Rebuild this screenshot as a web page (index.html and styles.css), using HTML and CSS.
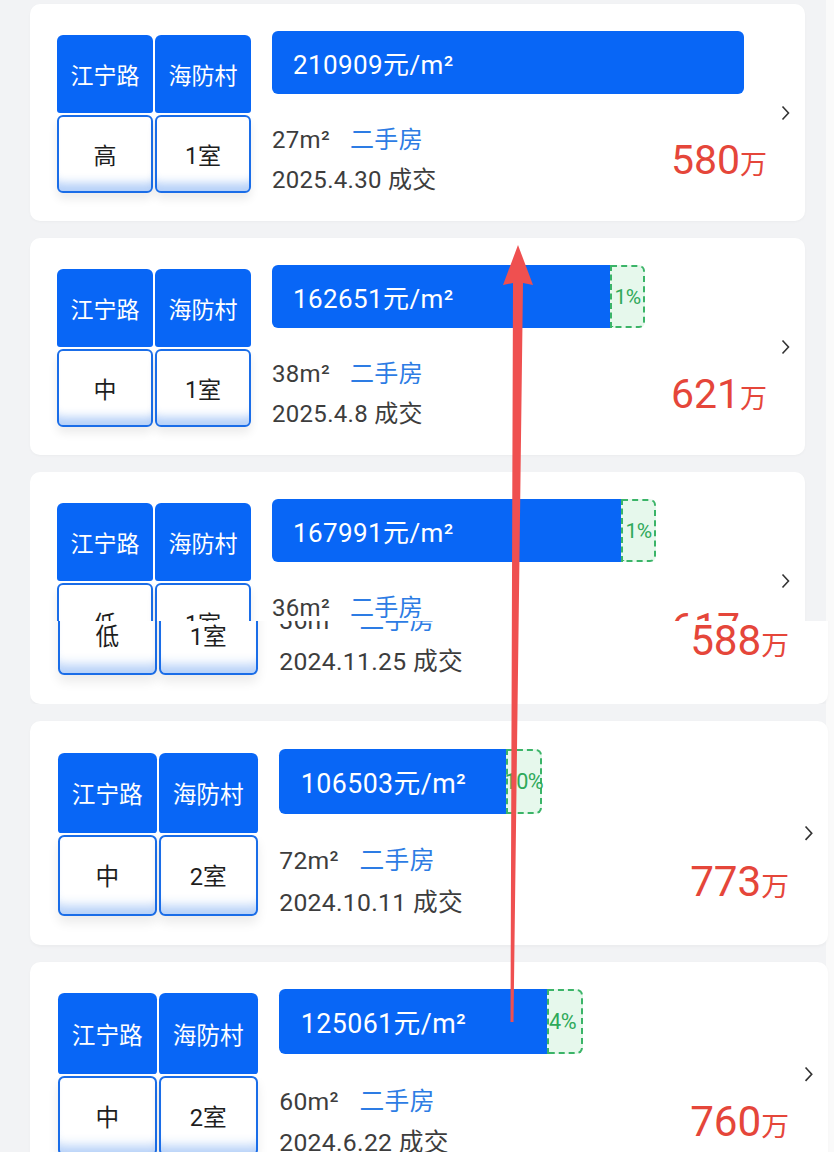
FILE: index.html
```html
<!DOCTYPE html>
<html lang="zh-CN">
<head>
    <meta charset="UTF-8">
    <meta name="viewport" content="width=device-width, initial-scale=1.0">
    <title>成交记录</title>
    <link rel="stylesheet" href="styles.css">
</head>
<body>
    <div class="list">
        <!-- 1 -->
        <div class="card">
            <div class="tags">
                <div class="tag area">江宁路</div>
                <div class="tag area">海防村</div>
                <div class="tag attr">高</div>
                <div class="tag attr">1室</div>
            </div>
            <div class="info">
                <div class="bar-row">
                    <div class="bar" style="width: 472px;">210909元/m²</div>
                </div>
                <div class="bottom">
                    <div class="meta">
                        <div>27m²<span class="kind">二手房</span></div>
                        <div>2025.4.30 成交</div>
                    </div>
                    <div class="price">580<small>万</small></div>
                </div>
            </div>
            <svg class="chev" width="9" height="16" viewBox="0 0 9 16"><path d="M1.5 1.5 L7.5 8 L1.5 14.5" fill="none" stroke="#333" stroke-width="1.6"/></svg>
        </div>

        <!-- 2 -->
        <div class="card">
            <div class="tags">
                <div class="tag area">江宁路</div>
                <div class="tag area">海防村</div>
                <div class="tag attr">中</div>
                <div class="tag attr">1室</div>
            </div>
            <div class="info">
                <div class="bar-row has-pct">
                    <div class="bar" style="width: 338px;">162651元/m²</div>
                    <div class="pct">1%</div>
                </div>
                <div class="bottom">
                    <div class="meta">
                        <div>38m²<span class="kind">二手房</span></div>
                        <div>2025.4.8 成交</div>
                    </div>
                    <div class="price">621<small>万</small></div>
                </div>
            </div>
            <svg class="chev" width="9" height="16" viewBox="0 0 9 16"><path d="M1.5 1.5 L7.5 8 L1.5 14.5" fill="none" stroke="#333" stroke-width="1.6"/></svg>
        </div>

        <!-- 3: two frames stitched together while scrolling -->
        <div class="stitch">
            <div class="stitch-top">
                <div class="card">
                    <div class="tags">
                        <div class="tag area">江宁路</div>
                        <div class="tag area">海防村</div>
                        <div class="tag attr">低</div>
                        <div class="tag attr">1室</div>
                    </div>
                    <div class="info">
                        <div class="bar-row has-pct">
                            <div class="bar" style="width: 349px;">167991元/m²</div>
                            <div class="pct">1%</div>
                        </div>
                        <div class="bottom">
                            <div class="meta">
                                <div>36m²<span class="kind">二手房</span></div>
                                <div>2024.11.25 成交</div>
                            </div>
                            <div class="price">617<small>万</small></div>
                        </div>
                    </div>
                    <svg class="chev" width="9" height="16" viewBox="0 0 9 16"><path d="M1.5 1.5 L7.5 8 L1.5 14.5" fill="none" stroke="#333" stroke-width="1.6"/></svg>
                </div>
            </div>
            <div class="stitch-bottom">
                <div class="card wide shifted">
                    <div class="tags">
                        <div class="tag area">江宁路</div>
                        <div class="tag area">海防村</div>
                        <div class="tag attr">低</div>
                        <div class="tag attr">1室</div>
                    </div>
                    <div class="info">
                        <div class="bar-row has-pct">
                            <div class="bar" style="width: 340px;">167991元/m²</div>
                            <div class="pct">1%</div>
                        </div>
                        <div class="bottom">
                            <div class="meta">
                                <div>36m²<span class="kind">二手房</span></div>
                                <div>2024.11.25 成交</div>
                            </div>
                            <div class="price">588<small>万</small></div>
                        </div>
                    </div>
                    <svg class="chev" width="9" height="16" viewBox="0 0 9 16"><path d="M1.5 1.5 L7.5 8 L1.5 14.5" fill="none" stroke="#333" stroke-width="1.6"/></svg>
                </div>
            </div>
        </div>

        <!-- 4 -->
        <div class="card wide">
            <div class="tags">
                <div class="tag area">江宁路</div>
                <div class="tag area">海防村</div>
                <div class="tag attr">中</div>
                <div class="tag attr">2室</div>
            </div>
            <div class="info">
                <div class="bar-row has-pct">
                    <div class="bar" style="width: 220px;">106503元/m²</div>
                    <div class="pct">10%</div>
                </div>
                <div class="bottom">
                    <div class="meta">
                        <div>72m²<span class="kind">二手房</span></div>
                        <div>2024.10.11 成交</div>
                    </div>
                    <div class="price">773<small>万</small></div>
                </div>
            </div>
            <svg class="chev" width="9" height="16" viewBox="0 0 9 16"><path d="M1.5 1.5 L7.5 8 L1.5 14.5" fill="none" stroke="#333" stroke-width="1.6"/></svg>
        </div>

        <!-- 5 -->
        <div class="card wide">
            <div class="tags">
                <div class="tag area">江宁路</div>
                <div class="tag area">海防村</div>
                <div class="tag attr">中</div>
                <div class="tag attr">2室</div>
            </div>
            <div class="info">
                <div class="bar-row has-pct">
                    <div class="bar" style="width: 260px;">125061元/m²</div>
                    <div class="pct left">4%</div>
                </div>
                <div class="bottom">
                    <div class="meta">
                        <div>60m²<span class="kind">二手房</span></div>
                        <div>2024.6.22 成交</div>
                    </div>
                    <div class="price">760<small>万</small></div>
                </div>
            </div>
            <svg class="chev" width="9" height="16" viewBox="0 0 9 16"><path d="M1.5 1.5 L7.5 8 L1.5 14.5" fill="none" stroke="#333" stroke-width="1.6"/></svg>
        </div>
    </div>

    <!-- hand-drawn annotation on top of the screenshot -->
    <svg class="annotation" width="834" height="1152" viewBox="0 0 834 1152">
        <polygon points="518,245 533,285 523,283 513.5,1022 510.5,1022 513,283 503,285" fill="#ef5050"/>
    </svg>
</body>
</html>
```

FILE: styles.css
```css
* {
    box-sizing: border-box;
}
body {
    margin: 0;
    padding: 4px 0 0 30px;
    position: relative;
    overflow: hidden;
    height: 1152px;
    font-family: Roboto, "Noto Sans CJK SC", sans-serif;
    background: linear-gradient(to right, #f2f3f5 826px, #fafafa 826px);
}
.list {
    display: flex;
    flex-direction: column;
    gap: 17px;
}
.card {
    width: 775px;
    height: 217px;
    flex-shrink: 0;
    background-color: #fff;
    border-radius: 10px;
    box-shadow: 0 1px 3px rgba(0, 0, 0, 0.03);
    display: flex;
    align-items: flex-start;
    padding: 27px 15px 0 27px;
}
/* lower frames of the capture are rendered slightly larger */
.card.wide {
    zoom: 1.03;
}
.tags {
    display: grid;
    grid-template-columns: 96px 96px;
    grid-template-rows: 78px 78px;
    gap: 2px;
    margin-top: 4px;
}
.tag {
    display: flex;
    align-items: center;
    justify-content: center;
    font-size: 23px;
}
.tag.area {
    background-color: #0866f6;
    color: #fff;
    border-radius: 6px 6px 3px 3px;
}
.tag.attr {
    background-color: #fff;
    color: #1e1e1e;
    border: 2px solid #1a6de8;
    border-radius: 6px;
    box-shadow: inset 0 -16px 10px -8px rgba(26, 109, 232, 0.32), 0 6px 10px rgba(0, 0, 0, 0.08);
}
.info {
    margin-left: 21px;
    width: 493px;
    display: flex;
    flex-direction: column;
}
.bar-row {
    display: flex;
    height: 63px;
}
.bar {
    background-color: #0866f6;
    color: #fff;
    border-radius: 6px;
    font-size: 26px;
    letter-spacing: 0.4px;
    padding-left: 21px;
    display: flex;
    align-items: center;
    white-space: nowrap;
}
.has-pct .bar {
    border-radius: 6px 0 0 6px;
}
.pct {
    width: 35px;
    border: 2px dashed #3bb468;
    border-radius: 0 6px 6px 0;
    background-color: #e6f8ec;
    color: #2fa95a;
    font-size: 21px;
    letter-spacing: -0.5px;
    display: flex;
    align-items: center;
    justify-content: center;
    white-space: nowrap;
}
.pct.left {
    justify-content: flex-start;
}
.bottom {
    display: flex;
    justify-content: space-between;
    align-items: center;
    margin-top: 26px;
}
.meta {
    font-size: 24px;
    letter-spacing: 0.3px;
    line-height: 40px;
    color: #3d3d3d;
}
.kind {
    color: #2d7ce4;
    margin-left: 20px;
}
.price {
    color: #e5463a;
    font-size: 41px;
    line-height: 1;
    margin-right: -3px;
}
.price small {
    font-size: 27px;
}
.chev {
    margin: 74px 0 0 17px;
}
.stitch {
    display: flex;
    flex-direction: column;
}
.stitch-top {
    height: 149px;
    overflow: hidden;
}
.stitch-bottom {
    height: 83px;
    overflow: hidden;
}
.shifted {
    margin-top: -136.4px;
}
.annotation {
    position: absolute;
    top: 0;
    left: 0;
    pointer-events: none;
}
```
